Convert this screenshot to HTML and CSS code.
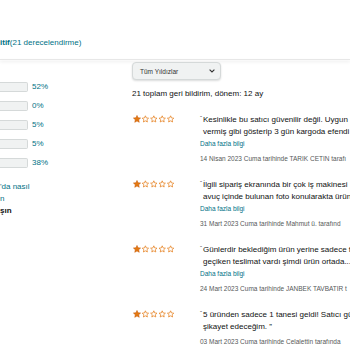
FILE: index.html
```html
<!DOCTYPE html>
<html lang="tr">
<head>
    <meta charset="UTF-8">
    <meta name="viewport" content="width=device-width, initial-scale=1.0">
    <title>Satıcı geri bildirimi</title>
    <link rel="stylesheet" href="styles.css">
</head>
<body>
    <div class="summary-head">
        <a class="rating-link"><b>itif</b>(21 derecelendirme)</a>
    </div>
    <div class="divider"></div>

    <div class="page">
        <!-- Left column: rating histogram and help links -->
        <div class="left-col">
            <div class="histogram">
                <div class="hist-row"><span class="bar"></span><span class="pct">52%</span></div>
                <div class="hist-row"><span class="bar"></span><span class="pct">0%</span></div>
                <div class="hist-row"><span class="bar"></span><span class="pct">5%</span></div>
                <div class="hist-row"><span class="bar"></span><span class="pct">5%</span></div>
                <div class="hist-row"><span class="bar"></span><span class="pct">38%</span></div>
            </div>
            <div class="help">
                <a class="help-link">'da nasıl</a>
                <a class="help-link">n</a>
                <span class="help-title">şın</span>
            </div>
        </div>

        <!-- Right column: filter and review list -->
        <div class="right-col">
            <div class="filter">
                <span>Tüm Yıldızlar</span>
                <svg class="chevron" width="6" height="4" viewBox="0 0 6 4"><path d="M0.6 0.6 L3 3 L5.4 0.6" fill="none" stroke="#333" stroke-width="1.1"/></svg>
            </div>
            <p class="count">21 toplam geri bildirim, dönem: 12 ay</p>

            <div class="reviews">
                <div class="review">
                    <div class="stars">
                        <svg width="42" height="8" viewBox="0 0 42 8"><use href="#full" x="0"/><use href="#empty" x="8.4"/><use href="#empty" x="16.8"/><use href="#empty" x="25.2"/><use href="#empty" x="33.6"/></svg>
                    </div>
                    <div class="review-body">
                        <p class="review-text"><span class="quote">“</span>Kesinlikle bu satıcı güvenilir değil. Uygun<br>vermiş gibi gösterip 3 gün kargoda efendi</p>
                        <a class="more">Daha fazla bilgi</a>
                        <p class="review-date">14 Nisan 2023 Cuma tarihinde TARIK CETIN tarafı</p>
                    </div>
                </div>
                <div class="review">
                    <div class="stars">
                        <svg width="42" height="8" viewBox="0 0 42 8"><use href="#full" x="0"/><use href="#empty" x="8.4"/><use href="#empty" x="16.8"/><use href="#empty" x="25.2"/><use href="#empty" x="33.6"/></svg>
                    </div>
                    <div class="review-body">
                        <p class="review-text"><span class="quote">“</span>İlgili sipariş ekranında bir çok iş makinesi<br>avuç içinde bulunan foto konularakta ürün</p>
                        <a class="more">Daha fazla bilgi</a>
                        <p class="review-date">31 Mart 2023 Cuma tarihinde Mahmut ü. tarafınd</p>
                    </div>
                </div>
                <div class="review">
                    <div class="stars">
                        <svg width="42" height="8" viewBox="0 0 42 8"><use href="#full" x="0"/><use href="#empty" x="8.4"/><use href="#empty" x="16.8"/><use href="#empty" x="25.2"/><use href="#empty" x="33.6"/></svg>
                    </div>
                    <div class="review-body">
                        <p class="review-text"><span class="quote">“</span>Günlerdir beklediğim ürün yerine sadece f<br>geçiken teslimat vardı şimdi ürün ortada...</p>
                        <a class="more">Daha fazla bilgi</a>
                        <p class="review-date">24 Mart 2023 Cuma tarihinde JANBEK TAVBATIR t</p>
                    </div>
                </div>
                <div class="review">
                    <div class="stars">
                        <svg width="42" height="8" viewBox="0 0 42 8"><use href="#full" x="0"/><use href="#empty" x="8.4"/><use href="#empty" x="16.8"/><use href="#empty" x="25.2"/><use href="#empty" x="33.6"/></svg>
                    </div>
                    <div class="review-body">
                        <p class="review-text"><span class="quote">“</span>5 üründen sadece 1 tanesi geldi! Satıcı gü<br>şikayet edeceğim. ”</p>
                        <p class="review-date">03 Mart 2023 Cuma tarihinde Celalettin tarafında</p>
                    </div>
                </div>
            </div>
        </div>
    </div>

    <!-- Star shapes reused by every rating -->
    <svg class="defs" width="0" height="0">
        <defs>
            <path id="full" d="M4 0.4 L5.05 2.75 L7.6 3 L5.7 4.75 L6.25 7.3 L4 6 L1.75 7.3 L2.3 4.75 L0.4 3 L2.95 2.75 Z" fill="#e47911" stroke="#c45500" stroke-width="0.5"/>
            <path id="empty" d="M4 0.8 L4.95 2.95 L7.2 3.2 L5.5 4.75 L6 7 L4 5.85 L2 7 L2.5 4.75 L0.8 3.2 L3.05 2.95 Z" fill="#fff" stroke="#e47911" stroke-width="0.7"/>
        </defs>
    </svg>
</body>
</html>
```

FILE: styles.css
```css
/* Page base, scrolled view so overflow is hidden */
html, body {
    overflow: hidden;
}

body {
    margin: 0;
    font-family: "Liberation Sans", Arial, sans-serif;
    color: #0f1111;
    background: #fff;
    width: 350px;
    height: 350px;
}

p {
    margin: 0;
}

a {
    color: #007185;
    text-decoration: none;
}

/* Header line with rating summary */
.summary-head {
    height: 59px;
    padding-top: 37px;
    box-sizing: border-box;
    font-size: 8px;
    line-height: 12px;
}

.rating-link b {
    font-weight: bold;
}

.divider {
    height: 1px;
    background: #e7e7e7;
    box-shadow: 0 2px 3px rgba(0, 0, 0, 0.12);
}

/* Two column layout */
.page {
    display: flex;
}

.left-col {
    width: 132px;
    flex-shrink: 0;
}

.right-col {
    flex: 1;
    min-width: 0;
}

/* Histogram rows */
.histogram {
    padding-top: 17px;
}

.hist-row {
    height: 19px;
    display: flex;
    align-items: center;
    gap: 4px;
}

.bar {
    width: 28px;
    height: 10px;
    background: #f0f2f2;
    border: 1px solid #d5d9d9;
    border-left: none;
    border-radius: 0 2px 2px 0;
    box-sizing: border-box;
}

.pct {
    font-size: 8px;
    color: #007185;
}

/* Help links under the histogram */
.help {
    margin-top: 9px;
    font-size: 8px;
    line-height: 12px;
}

.help-link, .help-title {
    display: block;
}

.help-title {
    font-weight: bold;
}

/* Star filter dropdown */
.filter {
    margin-top: 2px;
    width: 89px;
    height: 18px;
    box-sizing: border-box;
    padding: 0 5px 0 7px;
    display: flex;
    align-items: center;
    justify-content: space-between;
    font-size: 6.5px;
    color: #333;
    background: #f0f2f2;
    border: 1px solid #d5d9d9;
    border-radius: 4px;
    box-shadow: 0 1px 2px rgba(15, 17, 17, 0.15);
}

.count {
    margin-top: 8px;
    font-size: 8px;
    line-height: 12px;
}

/* Review list */
.reviews {
    margin-top: 14px;
}

.review {
    display: flex;
    margin-bottom: 15px;
    white-space: nowrap;
}

.stars {
    width: 67px;
    flex-shrink: 0;
    padding-left: 1px;
    padding-top: 1px;
}

.stars svg {
    display: block;
}

.review-text {
    padding-left: 3px;
    font-size: 8px;
    line-height: 12px;
}

.quote {
    display: inline-block;
    width: 3px;
    margin-left: -3px;
    font-size: 6px;
    vertical-align: top;
    line-height: 8px;
}

.more {
    display: block;
    font-size: 6.5px;
    line-height: 12px;
}

.review-date {
    margin-top: 4px;
    font-size: 6.5px;
    line-height: 10px;
    color: #565959;
}

.defs {
    position: absolute;
}
```
